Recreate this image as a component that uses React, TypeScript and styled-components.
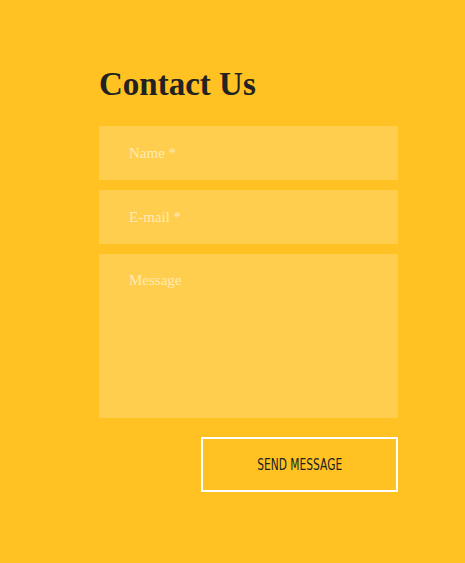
import styled, { createGlobalStyle } from "styled-components";

const Global = createGlobalStyle`
  html, body {
    margin: 0;
    padding: 0;
    background: #ffc222;
  }
`;

const Page = styled.div`
  min-height: 563px;
  background: #ffc222;
  display: flex;
  justify-content: center;
  padding-top: 64px;
  box-sizing: border-box;
`;

const Form = styled.form`
  width: 299px;
  display: flex;
  flex-direction: column;
  margin-left: 32px;
`;

const Title = styled.h2`
  margin: 0 0 22px;
  font-family: "Liberation Serif", serif;
  font-weight: 700;
  font-size: 33px;
  line-height: 40px;
  color: #222222;
`;

const fieldStyle = `
  display: block;
  width: 100%;
  box-sizing: border-box;
  border: 0;
  outline: 0;
  background: rgba(255, 255, 255, 0.2);
  color: #333;
  font-family: "Liberation Serif", serif;
  font-size: 15px;
  padding: 0 30px;
  margin-bottom: 10px;
  &::placeholder {
    color: rgba(255, 255, 255, 0.6);
  }
`;

const Input = styled.input`
  ${fieldStyle}
  height: 54px;
`;

const TextArea = styled.textarea`
  ${fieldStyle}
  height: 164px;
  padding-top: 18px;
  resize: none;
  margin-bottom: 19px;
`;

const Submit = styled.button`
  align-self: flex-end;
  width: 197px;
  height: 55px;
  background: none;
  border: 2px solid #ffffff;
  color: #222222;
  cursor: pointer;
  display: flex;
  align-items: center;
  justify-content: center;
  padding: 0;
`;

const SubmitLabel = styled.span`
  display: inline-block;
  font-family: "DejaVu Sans Condensed", "DejaVu Sans", sans-serif;
  font-size: 15px;
  transform: scaleX(0.79);
  white-space: nowrap;
`;

export default function App() {
  return (
    <Page>
      <Global />
      <Form onSubmit={(e) => e.preventDefault()}>
        <Title>Contact Us</Title>
        <Input type="text" name="name" placeholder="Name *" />
        <Input type="email" name="email" placeholder="E-mail *" />
        <TextArea name="message" placeholder="Message" />
        <Submit type="submit">
          <SubmitLabel>SEND MESSAGE</SubmitLabel>
        </Submit>
      </Form>
    </Page>
  );
}
